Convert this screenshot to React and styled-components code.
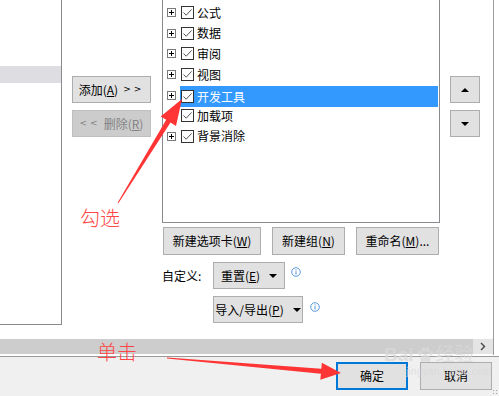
import React from "react";
import styled, { createGlobalStyle } from "styled-components";

const Global = createGlobalStyle`
  html, body { margin: 0; padding: 0; }
  body {
    width: 499px; height: 396px; overflow: hidden; background: #fff;
    font-family: "Noto Sans CJK SC", "Microsoft YaHei", sans-serif;
    font-size: 12px; color: #000;
  }
  * { box-sizing: border-box; }
`;

const Page = styled.div`
  position: relative;
  width: 499px;
  height: 396px;
  display: flex;
  flex-direction: column;
  background: #fff;
`;

const Viewport = styled.div`
  width: 494px;
  height: 355px;
  border-right: 1px solid #9c9c9c;
  display: flex;
  flex-direction: column;
`;

const Content = styled.div`
  height: 339px;
  display: flex;
  align-items: flex-start;
`;

const LeftList = styled.div`
  width: 62px;
  height: 325px;
  border-right: 1px solid #8a8a8f;
  border-bottom: 1px solid #8a8a8f;
  padding-top: 66px;
`;

const ListSel = styled.div`
  height: 17px;
  background: #dddde2;
`;

const MidCol = styled.div`
  margin-left: 10px;
  width: 79px;
  padding-top: 76px;
  display: flex;
  flex-direction: column;
  gap: 7px;
`;

const Btn = styled.button`
  width: ${(p) => p.$w}px;
  height: ${(p) => p.$h || 27}px;
  padding: 0;
  margin: 0;
  background: ${(p) => (p.$disabled ? "#cccccc" : "#e1e1e1")};
  border: ${(p) => (p.$primary ? "2px solid #0078d7" : p.$disabled ? "1px solid #bfbfbf" : "1px solid #adadad")};
  color: ${(p) => (p.$disabled ? "#838383" : "#000")};
  font-family: inherit;
  font-size: 12px;
  line-height: 1;
  display: flex;
  align-items: center;
  justify-content: center;
  gap: ${(p) => p.$gap || 0}px;
  white-space: nowrap;
`;

const Arrows = styled.span`
  font-family: "DejaVu Sans", sans-serif;
  font-size: 9px;
  letter-spacing: 3px;
  margin: 0 ${(p) => p.$ml || 0}px 0 ${(p) => p.$mr || 0}px;
`;

const TreeCol = styled.div`
  margin-left: 11px;
  width: 278px;
  display: flex;
  flex-direction: column;
`;

const TreeBox = styled.div`
  height: 223px;
  border: 1px solid #8a8a8f;
  border-top: none;
  padding-top: 2.5px;
  padding-right: 1px;
  display: flex;
  flex-direction: column;
`;

const Row = styled.div`
  height: 20.6px;
  display: flex;
  align-items: center;
  padding-left: 4px;
`;

const Expander = styled.span`
  width: 9px;
  height: 9px;
  flex: none;
  border: 1px solid #7a7a7a;
  background: #fff;
  position: relative;
  visibility: ${(p) => (p.$hidden ? "hidden" : "visible")};
  &::before, &::after {
    content: "";
    position: absolute;
    background: #000;
  }
  &::before { left: 1px; top: 3px; width: 5px; height: 1px; }
  &::after { left: 3px; top: 1px; width: 1px; height: 5px; }
`;

const ItemBody = styled.div`
  flex: 1;
  height: 21px;
  margin-left: 4px;
  padding-left: 1px;
  display: flex;
  align-items: center;
  gap: 3px;
  background: ${(p) => (p.$sel ? "#3399ff" : "transparent")};
  color: ${(p) => (p.$sel ? "#fff" : "#000")};
  margin-top: ${(p) => (p.$sel ? "3px" : "0")};
`;

const Check = styled.span`
  width: 13px;
  height: 13px;
  flex: none;
  border: 1px solid #333;
  background: #fff;
  display: flex;
  align-items: center;
  justify-content: center;
`;

const ItemText = styled.span`
  font-size: 12px;
  line-height: 1;
  margin-top: ${(p) => (p.$sel ? "-5px" : "0")};
`;

const BtnRow = styled.div`
  margin-top: 4px;
  padding-left: 1px;
  display: flex;
  gap: 11px;
`;

const OptRow = styled.div`
  margin-top: 7px;
  display: flex;
  align-items: flex-start;
  padding-left: ${(p) => p.$pl || 0}px;
`;

const OptLabel = styled.span`
  width: 51px;
  height: 27px;
  display: flex;
  align-items: center;
  font-size: 12px;
`;

const Info = styled.span`
  margin-left: ${(p) => p.$ml}px;
  margin-top: ${(p) => p.$mt}px;
  display: flex;
`;

const Down = styled.span`
  width: 0; height: 0;
  border-left: 4px solid transparent;
  border-right: 4px solid transparent;
  border-top: 4px solid #000;
`;

const Up = styled.span`
  width: 0; height: 0;
  border-left: 4px solid transparent;
  border-right: 4px solid transparent;
  border-bottom: 4px solid #000;
`;

const UpDownCol = styled.div`
  margin-left: 10px;
  padding-top: 76px;
  display: flex;
  flex-direction: column;
  gap: 7px;
`;

const HScroll = styled.div`
  height: 15px;
  display: flex;
`;

const Thumb = styled.div`
  flex: 1;
  background: #cdcdcd;
`;

const ScrollArrow = styled.div`
  width: 20px;
  background: #e4e4e4;
  display: flex;
  align-items: center;
  justify-content: center;
`;

const Separator = styled.div`
  margin-top: 1px;
  height: 1px;
  background: #9a9a9a;
`;

const Footer = styled.div`
  flex: 1;
  background: #f0f0f0;
  display: flex;
  justify-content: flex-end;
  align-items: flex-start;
  padding: 5px 7px 0 0;
  gap: 12px;
`;

const Grip = styled.div`
  position: absolute;
  right: 1px;
  bottom: 1px;
  width: 6px;
  height: 6px;
  background-image: radial-gradient(circle, #a0a0a0 0.8px, transparent 1px);
  background-size: 3px 3px;
`;

const Overlay = styled.svg`
  position: absolute;
  left: 0;
  top: 0;
  pointer-events: none;
`;

const AnnoText = styled.span`
  position: absolute;
  left: ${(p) => p.$x}px;
  top: ${(p) => p.$y}px;
  font-family: "Noto Sans CJK SC", sans-serif;
  font-weight: 300;
  font-size: 20px;
  line-height: 20px;
  color: #ff4545;
  letter-spacing: 0px;
`;

const Watermark = styled.div`
  position: absolute;
  left: 384px;
  top: 344px;
  color: #d9d9d9;
  opacity: 0.75;
  font-family: "Liberation Sans", "Noto Sans CJK SC", sans-serif;
  display: flex;
  flex-direction: column;
  align-items: flex-start;
  pointer-events: none;
`;

const WmTop = styled.span`
  font-size: 19px;
  font-weight: bold;
  line-height: 22px;
  display: flex;
  align-items: center;
  gap: 2px;
`;

const WmBottom = styled.span`
  font-size: 10px;
  line-height: 12px;
  margin-left: 22px;
  letter-spacing: 0.3px;
`;

const CheckMark = () => (
  <svg width="11" height="11" viewBox="0 0 11 11">
    <path d="M1.5 5.5 L4.2 8.2 L9.6 2.4" fill="none" stroke="#555" strokeWidth="1" />
  </svg>
);

const InfoIcon = () => (
  <svg width="10" height="10" viewBox="0 0 10 10">
    <circle cx="5" cy="5" r="4.3" fill="#fff" stroke="#4a90d9" strokeWidth="0.9" />
    <rect x="4.5" y="4.2" width="1" height="3.3" fill="#4a90d9" />
    <rect x="4.5" y="2.4" width="1" height="1" fill="#4a90d9" />
  </svg>
);

const items = [
  { label: "公式", exp: true },
  { label: "数据", exp: true },
  { label: "审阅", exp: true },
  { label: "视图", exp: true },
  { label: "开发工具", exp: true, sel: true },
  { label: "加载项", exp: false },
  { label: "背景消除", exp: true },
];

const TreeItem = ({ label, exp, sel }) => (
  <Row>
    <Expander $hidden={!exp} />
    <ItemBody $sel={sel}>
      <Check>
        <CheckMark />
      </Check>
      <ItemText>{label}</ItemText>
    </ItemBody>
  </Row>
);

function arrowPoints(tail, tip, headLen, headHalf, tailW, baseW) {
  const dx = tip[0] - tail[0];
  const dy = tip[1] - tail[1];
  const len = Math.hypot(dx, dy);
  const u = [dx / len, dy / len];
  const n = [-u[1], u[0]];
  const base = [tip[0] - headLen * u[0], tip[1] - headLen * u[1]];
  const p = (pt, k) => `${(pt[0] + k * n[0]).toFixed(1)},${(pt[1] + k * n[1]).toFixed(1)}`;
  return [
    p(tail, tailW / 2),
    p(base, baseW / 2),
    p(base, headHalf),
    `${tip[0]},${tip[1]}`,
    p(base, -headHalf),
    p(base, -baseW / 2),
    p(tail, -tailW / 2),
  ].join(" ");
}

export default function App() {
  return (
    <Page>
      <Global />
      <Viewport>
        <Content>
          <LeftList>
            <ListSel />
          </LeftList>
          <MidCol>
            <Btn $w={79} $gap={0}>
              添加(<u>A</u>)<Arrows $mr={5}>&gt;&gt;</Arrows>
            </Btn>
            <Btn $w={79} $disabled>
              <Arrows $ml={3}>&lt;&lt;</Arrows>删除(<u>R</u>)
            </Btn>
          </MidCol>
          <TreeCol>
            <TreeBox>
              {items.map((it) => (
                <TreeItem key={it.label} {...it} />
              ))}
            </TreeBox>
            <BtnRow>
              <Btn $w={98} $h={28}>
                新建选项卡(<u>W</u>)
              </Btn>
              <Btn $w={73} $h={28}>
                新建组(<u>N</u>)
              </Btn>
              <Btn $w={83} $h={28}>
                重命名(<u>M</u>)...
              </Btn>
            </BtnRow>
            <OptRow>
              <OptLabel>自定义:</OptLabel>
              <Btn $w={72} $gap={9}>
                <span>
                  重置(<u>E</u>)
                </span>
                <Down />
              </Btn>
              <Info $ml={6} $mt={5}>
                <InfoIcon />
              </Info>
            </OptRow>
            <OptRow $pl={51}>
              <Btn $w={90} $gap={9}>
                <span>
                  导入/导出(<u>P</u>)
                </span>
                <Down />
              </Btn>
              <Info $ml={7} $mt={6}>
                <InfoIcon />
              </Info>
            </OptRow>
          </TreeCol>
          <UpDownCol>
            <Btn $w={30}>
              <Up />
            </Btn>
            <Btn $w={30}>
              <Down />
            </Btn>
          </UpDownCol>
        </Content>
        <HScroll>
          <Thumb />
          <ScrollArrow>
            <svg width="6" height="9" viewBox="0 0 6 9">
              <path d="M1 1 L4.5 4.5 L1 8" fill="none" stroke="#444" strokeWidth="1.4" />
            </svg>
          </ScrollArrow>
        </HScroll>
      </Viewport>
      <Separator />
      <Footer>
        <Btn $w={72} $h={28} $primary>
          确定
        </Btn>
        <Btn $w={72} $h={28}>
          取消
        </Btn>
      </Footer>
      <Grip />
      <Watermark>
        <WmTop>
          Bai
          <svg width="18" height="18" viewBox="0 0 18 18">
            <g fill="#d9d9d9">
              <ellipse cx="4" cy="7" rx="2" ry="2.5" />
              <ellipse cx="7.5" cy="3.5" rx="2" ry="2.5" />
              <ellipse cx="11.5" cy="3.5" rx="2" ry="2.5" />
              <ellipse cx="15" cy="7" rx="2" ry="2.5" />
              <path d="M9.5 8 C6 8 4 12 4.5 14.5 C5 16.5 8 16 9.5 15.5 C11 16 14 16.5 14.5 14.5 C15 12 13 8 9.5 8 Z" />
            </g>
          </svg>
          <span style={{ fontWeight: "normal" }}>经验</span>
        </WmTop>
        <WmBottom>jingyan.baidu.com</WmBottom>
      </Watermark>
      <Overlay width="499" height="396" viewBox="0 0 499 396">
        <polygon points={arrowPoints([118, 203], [182, 99], 26, 9, 1, 5)} fill="#ff3535" />
        <polygon points={arrowPoints([167, 358], [341, 373], 20, 8.5, 1, 5)} fill="#ff3535" />
      </Overlay>
      <AnnoText $x={80} $y={208}>勾选</AnnoText>
      <AnnoText $x={97} $y={342}>单击</AnnoText>
    </Page>
  );
}
